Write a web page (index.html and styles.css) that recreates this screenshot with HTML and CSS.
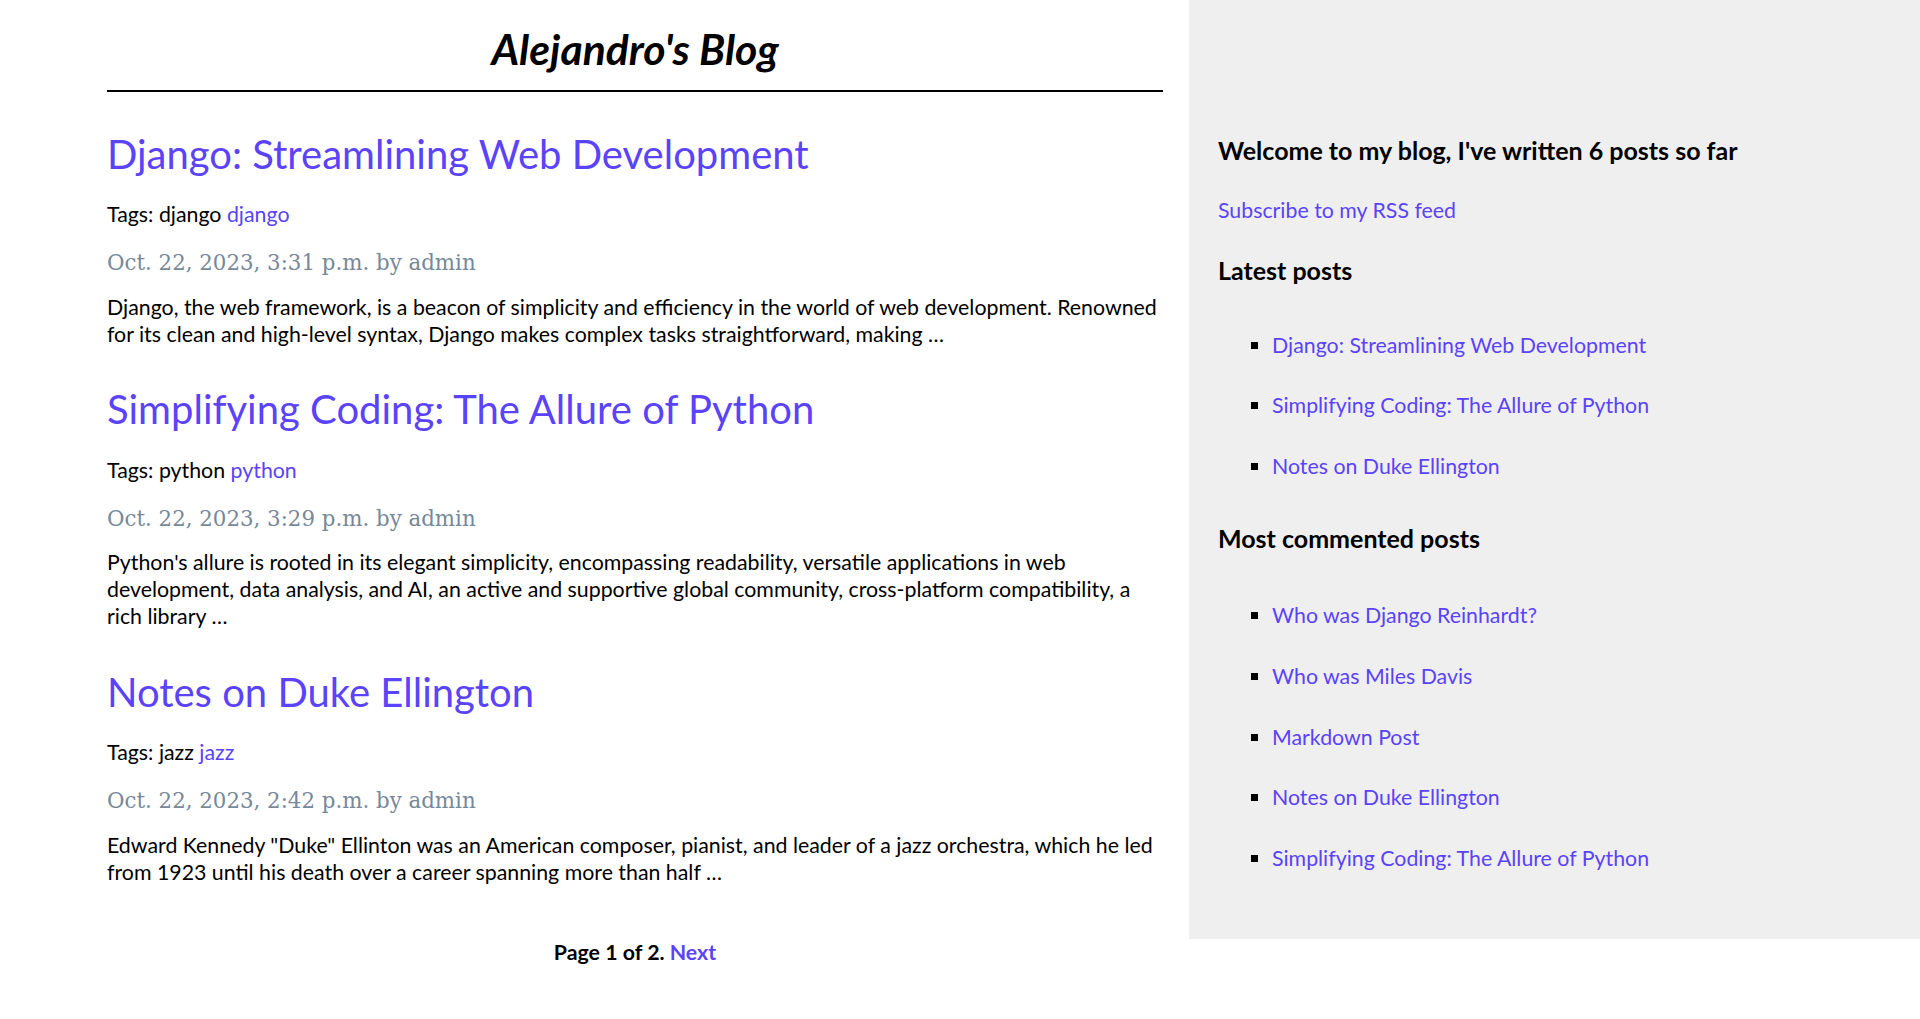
FILE: index.html
```html
<!DOCTYPE html>
<html lang="en">
<head>
<meta charset="utf-8">
<title>Alejandro's Blog</title>
<link rel="stylesheet" href="styles.css">
</head>
<body>
<div class="page">
  <main class="content">
    <h1 class="site-title">Alejandro's Blog</h1>

    <article class="post">
      <h2 class="post-title"><a href="#">Django: Streamlining Web Development</a></h2>
      <p class="tags">Tags: django <a href="#">django</a></p>
      <p class="date">Oct. 22, 2023, 3:31 p.m. by admin</p>
      <p class="excerpt">Django, the web framework, is a beacon of simplicity and efficiency in the world of web development. Renowned for its clean and high-level syntax, Django makes complex tasks straightforward, making …</p>
    </article>

    <article class="post">
      <h2 class="post-title"><a href="#">Simplifying Coding: The Allure of Python</a></h2>
      <p class="tags">Tags: python <a href="#">python</a></p>
      <p class="date">Oct. 22, 2023, 3:29 p.m. by admin</p>
      <p class="excerpt">Python's allure is rooted in its elegant simplicity, encompassing readability, versatile applications in web development, data analysis, and AI, an active and supportive global community, cross-platform compatibility, a rich library …</p>
    </article>

    <article class="post">
      <h2 class="post-title"><a href="#">Notes on Duke Ellington</a></h2>
      <p class="tags">Tags: jazz <a href="#">jazz</a></p>
      <p class="date">Oct. 22, 2023, 2:42 p.m. by admin</p>
      <p class="excerpt">Edward Kennedy "Duke" Ellinton was an American composer, pianist, and leader of a jazz orchestra, which he led from 1923 until his death over a career spanning more than half …</p>
    </article>

    <div class="pagination">
      <span class="current">Page 1 of 2.</span>
      <a href="#">Next</a>
    </div>
  </main>

  <aside class="sidebar">
    <h3 class="side-title welcome">Welcome to my blog, I've written 6 posts so far</h3>
    <p class="rss"><a href="#">Subscribe to my RSS feed</a></p>
    <h3 class="side-title latest">Latest posts</h3>
    <ul class="side-list">
      <li><a href="#">Django: Streamlining Web Development</a></li>
      <li><a href="#">Simplifying Coding: The Allure of Python</a></li>
      <li><a href="#">Notes on Duke Ellington</a></li>
    </ul>
    <h3 class="side-title">Most commented posts</h3>
    <ul class="side-list commented">
      <li><a href="#">Who was Django Reinhardt?</a></li>
      <li><a href="#">Who was Miles Davis</a></li>
      <li><a href="#">Markdown Post</a></li>
      <li><a href="#">Notes on Duke Ellington</a></li>
      <li><a href="#">Simplifying Coding: The Allure of Python</a></li>
    </ul>
  </aside>
</div>
</body>
</html>
```

FILE: styles.css
```css
html, body {
  margin: 0;
  padding: 0;
  background: #fff;
}

body {
  font-family: Lato, "Open Sans", sans-serif;
  font-size: 21.33px;
  line-height: 27px;
  color: #000;
}

a {
  color: #5a43fb;
  text-decoration: none;
}

.page {
  display: flex;
  align-items: flex-start;
}

.content {
  flex: 0 0 1056px;
  margin-left: 107px;
}

.site-title {
  margin: 25px 0 0;
  padding-bottom: 17px;
  border-bottom: 2px solid #000;
  font-size: 42.67px;
  line-height: 48px;
  font-style: italic;
  font-weight: 700;
  text-align: center;
}

.post-title {
  margin: 36.5px 0 0;
  font-size: 40px;
  line-height: 50px;
  font-weight: 400;
}

.post:first-of-type .post-title {
  margin-top: 37px;
}

.tags {
  margin: 22.3px 0 0;
}

.date {
  margin: 21.2px 0 0;
  font-family: "DejaVu Serif", serif;
  color: #778899;
  font-size: 21.33px;
}

.excerpt {
  margin: 17.5px 0 0;
}

.pagination {
  margin-top: 53px;
  text-align: center;
  font-weight: 700;
}

.sidebar {
  flex: 0 0 auto;
  margin-left: 26px;
  width: 673px;
  padding: 30px 30px 33px 29px;
  background: #efefef;
}

.side-title {
  margin: 44.5px 0 0;
  font-size: 25px;
  line-height: 27px;
  font-weight: 700;
}

.side-title.welcome {
  margin-top: 107px;
}

.side-title.latest {
  margin-top: 32.5px;
}

.rss {
  margin: 33px 0 0;
}

.side-list {
  list-style: square;
  margin: 48px 0 0;
  padding-left: 54px;
}

.side-list.commented {
  margin-top: 50.5px;
}

.side-list li {
  margin-bottom: 33.8px;
}
```
